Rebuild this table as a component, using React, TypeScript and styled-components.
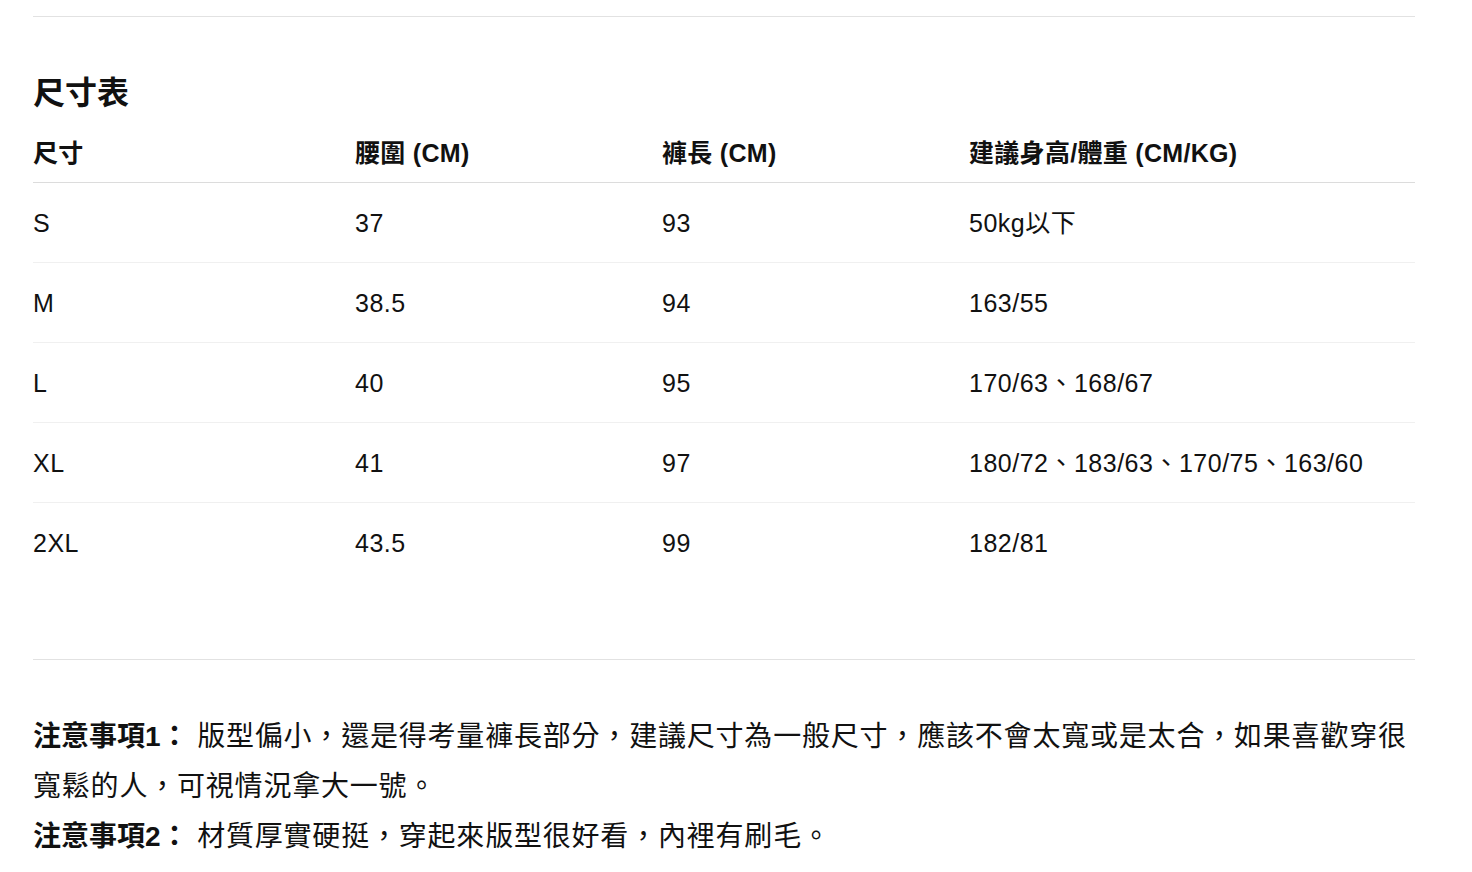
import React from "react";
import styled, { createGlobalStyle } from "styled-components";

const GlobalStyle = createGlobalStyle`
  html, body {
    margin: 0;
    padding: 0;
    background: #ffffff;
  }
  body {
    font-family: "Liberation Sans", "Noto Sans CJK TC", "Noto Sans", sans-serif;
    color: #111111;
  }
`;

interface SizeRow {
  size: string;
  waist: string;
  length: string;
  fit: string;
}

const rows: SizeRow[] = [
  { size: "S", waist: "37", length: "93", fit: "50kg以下" },
  { size: "M", waist: "38.5", length: "94", fit: "163/55" },
  { size: "L", waist: "40", length: "95", fit: "170/63、168/67" },
  { size: "XL", waist: "41", length: "97", fit: "180/72、183/63、170/75、163/60" },
  { size: "2XL", waist: "43.5", length: "99", fit: "182/81" },
];

const headers = ["尺寸", "腰圍 (CM)", "褲長 (CM)", "建議身高/體重 (CM/KG)"];

const notes = [
  {
    label: "注意事項1：",
    text: "版型偏小，還是得考量褲長部分，建議尺寸為一般尺寸，應該不會太寬或是太合，如果喜歡穿很寬鬆的人，可視情況拿大一號。",
  },
  {
    label: "注意事項2：",
    text: "材質厚實硬挺，穿起來版型很好看，內裡有刷毛。",
  },
];

export default function App() {
  return (
    <>
      <GlobalStyle />
      <Page>
        <Divider />
        <Title>尺寸表</Title>
        <Table>
          <HeaderRow>
            {headers.map((h) => (
              <HeadCell key={h}>{h}</HeadCell>
            ))}
          </HeaderRow>
          {rows.map((r, i) => (
            <BodyRow key={r.size} last={i === rows.length - 1}>
              <Cell>{r.size}</Cell>
              <Cell>{r.waist}</Cell>
              <Cell>{r.length}</Cell>
              <Cell>{r.fit}</Cell>
            </BodyRow>
          ))}
        </Table>
        <Divider className="bottom" />
        <Notes>
          {notes.map((n) => (
            <Note key={n.label}>
              <strong>{n.label}</strong> {n.text}
            </Note>
          ))}
        </Notes>
      </Page>
    </>
  );
}

const Page = styled.div`
  width: 1382px;
  margin-left: 33px;
  padding-top: 16px;

  .bottom {
    margin-top: 76px;
  }
`;

const Divider = styled.div`
  height: 1px;
  background: #e2e2e2;
`;

const Title = styled.h2`
  margin: 57px 0 12px;
  font-size: 32px;
  line-height: 38px;
  font-weight: 700;
  color: #111;
`;

const Table = styled.div`
  display: flex;
  flex-direction: column;
`;

const columns = "322px 307px 307px 1fr";

const HeaderRow = styled.div`
  display: grid;
  grid-template-columns: ${columns};
  align-items: center;
  height: 58px;
  border-bottom: 1px solid #dcdcdc;
`;

const HeadCell = styled.div`
  font-size: 25px;
  line-height: 30px;
  letter-spacing: 0.3px;
  font-weight: 700;
  color: #111;
`;

const BodyRow = styled.div<{ last?: boolean }>`
  display: grid;
  grid-template-columns: ${columns};
  align-items: center;
  height: 80px;
  box-sizing: border-box;
  border-bottom: 1px solid ${(p) => (p.last ? "transparent" : "#f0f0f0")};
`;

const Cell = styled.div`
  font-size: 25px;
  line-height: 30px;
  letter-spacing: 0.5px;
  color: #111;
`;

const Notes = styled.div`
  padding-top: 52px;
`;

const Note = styled.p`
  margin: 0;
  font-size: 28px;
  line-height: 50px;
  letter-spacing: 0.8px;
  color: #111;

  strong {
    font-weight: 700;
    letter-spacing: 0;
  }
`;
